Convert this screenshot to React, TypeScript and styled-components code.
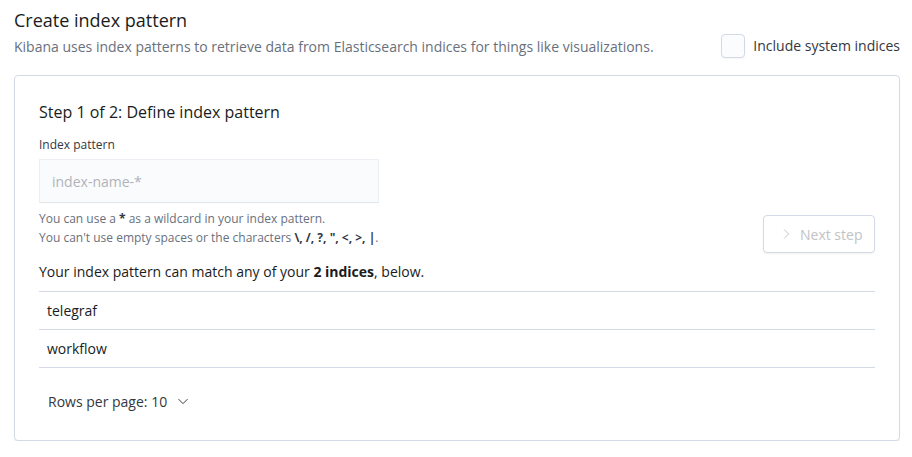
import React from "react";
import styled, { createGlobalStyle } from "styled-components";

const Global = createGlobalStyle`
  html, body { margin: 0; padding: 0; background: #fff; }
  body { font-family: "Open Sans", "Noto Sans", sans-serif; color: #343741; -webkit-font-smoothing: antialiased; }
  * { box-sizing: border-box; }
`;

const Page = styled.div`
  padding: 8px 12px 0 14px;
  width: 912px;
`;

const Header = styled.div`
  display: flex;
  justify-content: space-between;
  align-items: flex-start;
`;

const HeaderText = styled.div`
  display: flex;
  flex-direction: column;
`;

const Title = styled.h1`
  margin: 0;
  font-size: 18px;
  line-height: 24px;
  font-weight: 400;
  color: #1a1c21;
`;

const Subtitle = styled.p`
  margin: 5px 0 0;
  font-size: 14px;
  line-height: 20px;
  color: #69707d;
`;

const CheckRow = styled.label`
  display: flex;
  align-items: center;
  gap: 8px;
  margin-top: 26px;
  font-size: 14px;
  line-height: 20px;
  color: #343741;
`;

const CheckBox = styled.span`
  width: 24px;
  height: 24px;
  border: 1px solid #d3dae6;
  border-radius: 4px;
  background: #fbfcfd;
  box-shadow: 0 1px 1px rgba(0, 0, 0, 0.04);
`;

const Panel = styled.section`
  margin-top: 17px;
  border: 1px solid #d3dae6;
  border-radius: 4px;
  box-shadow: 0 2px 2px -1px rgba(152, 162, 179, 0.3);
  padding: 24px 24px 25px 24px;
  background: #fff;
`;

const StepTitle = styled.h2`
  margin: 0;
  font-size: 16px;
  line-height: 24px;
  font-weight: 400;
  color: #1a1c21;
`;

const FormRow = styled.div`
  display: flex;
  justify-content: space-between;
  align-items: flex-end;
  margin-top: 12px;
`;

const Field = styled.div`
  display: flex;
  flex-direction: column;
`;

const Label = styled.div`
  font-size: 12px;
  line-height: 18px;
  color: #343741;
`;

const Input = styled.input`
  margin-top: 5px;
  width: 340px;
  height: 44px;
  border: 1px solid #eceff3;
  border-bottom-color: #e2e5ea;
  background: #fafbfc;
  padding: 0 12px;
  font-family: inherit;
  font-size: 14px;
  color: #343741;
  outline: none;
  &::placeholder { color: #b0b3ba; }
`;

const Help = styled.div`
  margin-top: 6px;
  padding-bottom: 6px;
  font-size: 12px;
  line-height: 19px;
  color: #69707d;
  b { color: #343741; font-weight: 700; }
`;

const NextButton = styled.button`
  display: flex;
  align-items: center;
  gap: 8px;
  width: 112px;
  height: 38px;
  padding: 0 0 0 16px;
  border: 1px solid #d3dae6;
  border-radius: 4px;
  background: #fff;
  color: #c2c3c6;
  font-family: inherit;
  font-size: 14px;
  box-shadow: 0 1px 2px rgba(0, 0, 0, 0.06);
`;

const Match = styled.p`
  margin: 9px 0 0;
  font-size: 14px;
  line-height: 20px;
  color: #1a1c21;
  b { font-weight: 700; }
`;

const Table = styled.div`
  margin-top: 9px;
  border-top: 1px solid #d3dae6;
`;

const Row = styled.div`
  height: 38px;
  display: flex;
  align-items: center;
  padding-left: 8px;
  border-bottom: 1px solid #d3dae6;
  font-size: 14px;
  color: #1a1c21;
`;

const Pager = styled.button`
  margin-top: 19px;
  display: flex;
  align-items: center;
  gap: 10px;
  height: 28px;
  padding: 0 0 0 9px;
  border: none;
  background: none;
  font-family: inherit;
  font-size: 14px;
  color: #343741;
`;

const Chevron = ({ dir, color }: { dir: "right" | "down"; color: string }) => (
  <svg width="12" height="12" viewBox="0 0 16 16" fill="none" stroke={color} strokeWidth="1.3">
    {dir === "right" ? <path d="M5.5 2 L11.5 8 L5.5 14" /> : <path d="M2 5.5 L8 11.5 L14 5.5" />}
  </svg>
);

export default function App() {
  return (
    <>
      <Global />
      <Page>
        <Header>
          <HeaderText>
            <Title>Create index pattern</Title>
            <Subtitle>
              Kibana uses index patterns to retrieve data from Elasticsearch indices for things like visualizations.
            </Subtitle>
          </HeaderText>
          <CheckRow>
            <CheckBox />
            Include system indices
          </CheckRow>
        </Header>
        <Panel>
          <StepTitle>Step 1 of 2: Define index pattern</StepTitle>
          <FormRow>
            <Field>
              <Label>Index pattern</Label>
              <Input placeholder="index-name-*" />
              <Help>
                You can use a <b>*</b> as a wildcard in your index pattern.
                <br />
                You can't use empty spaces or the characters <b>\, /, ?, ", &lt;, &gt;, |</b>.
              </Help>
            </Field>
            <NextButton disabled>
              <Chevron dir="right" color="#c2c3c6" />
              Next step
            </NextButton>
          </FormRow>
          <Match>
            Your index pattern can match any of your <b>2 indices</b>, below.
          </Match>
          <Table>
            <Row>telegraf</Row>
            <Row>workflow</Row>
          </Table>
          <Pager>
            Rows per page: 10
            <Chevron dir="down" color="#343741" />
          </Pager>
        </Panel>
      </Page>
    </>
  );
}
